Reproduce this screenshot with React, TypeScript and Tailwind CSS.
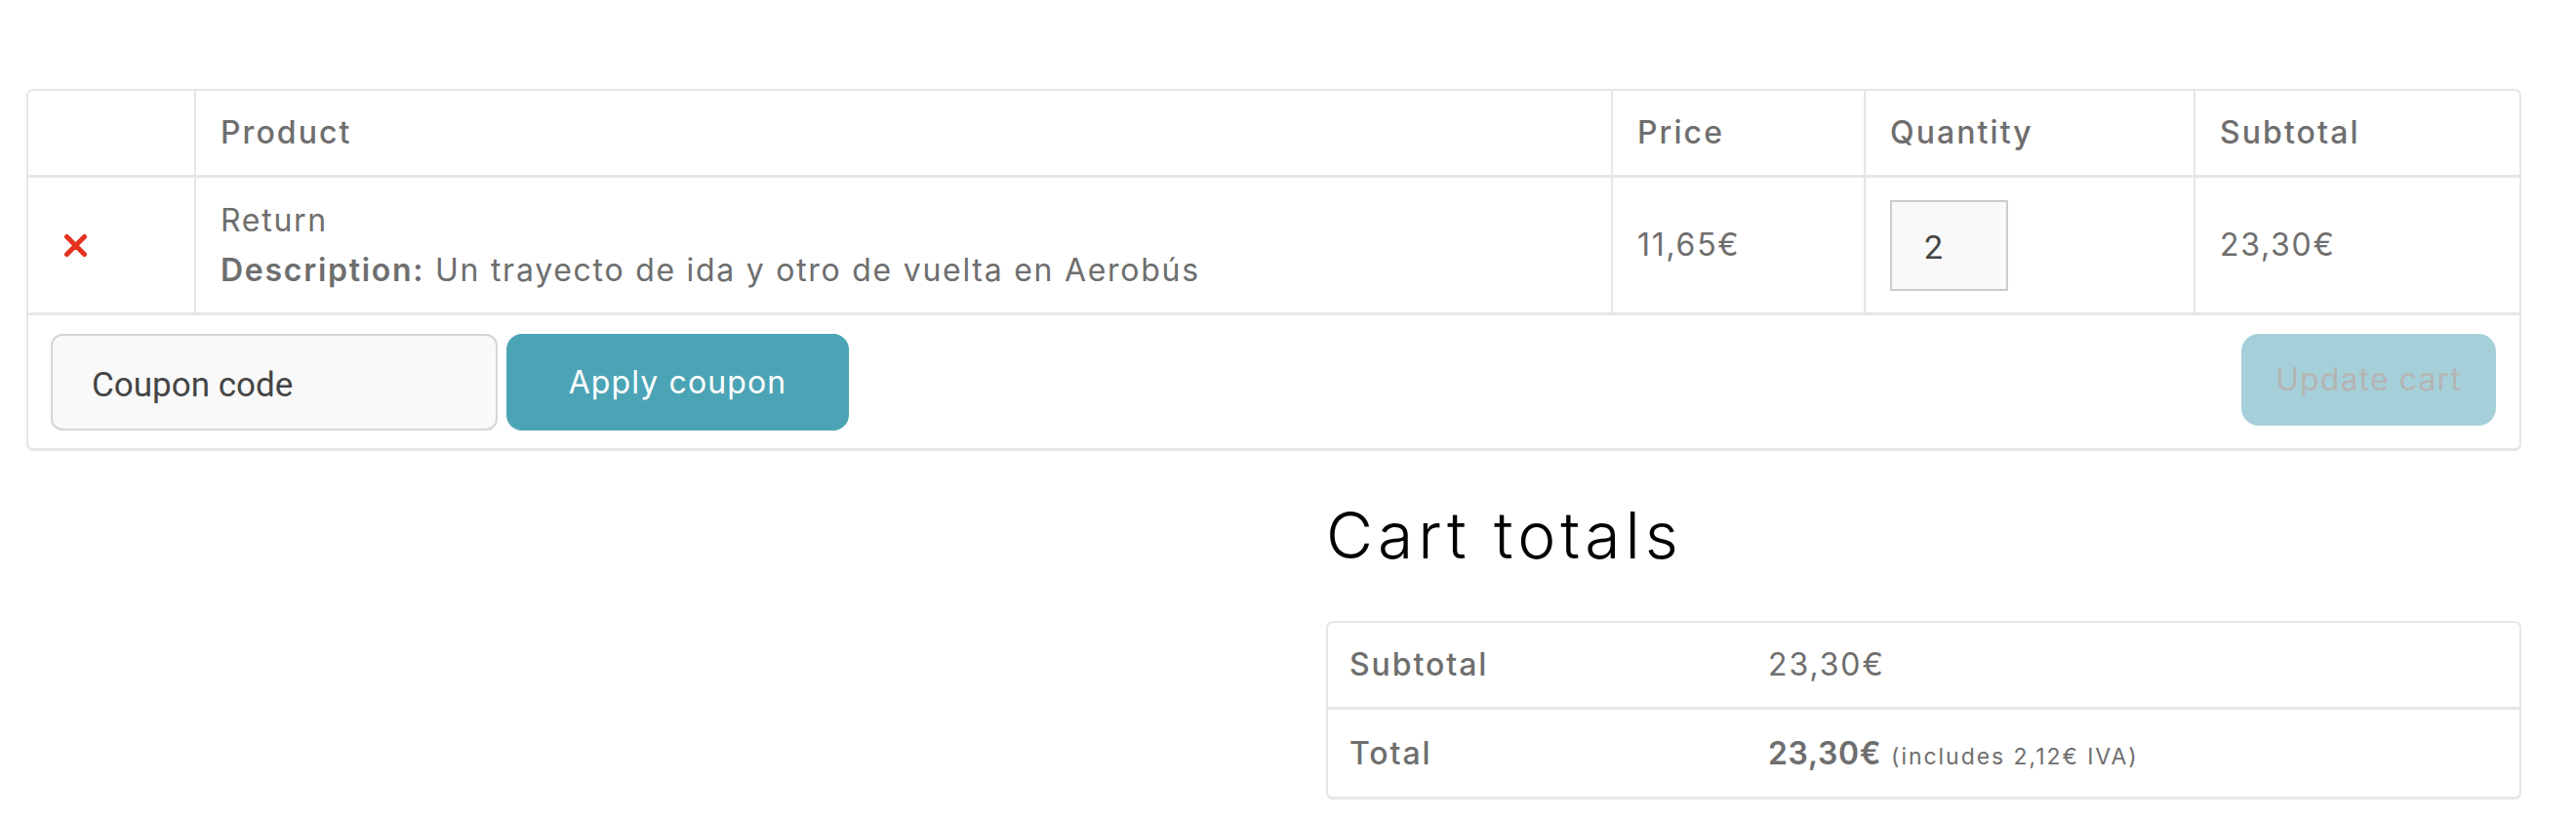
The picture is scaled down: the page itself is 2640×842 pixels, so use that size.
import React from "react";

const F = { fontFamily: "Inter, 'Open Sans', sans-serif" };

function XIcon() {
  return (
    <svg width="25" height="25" viewBox="0 0 25 25" className="block">
      <path d="M3.5 3.5 L21.5 21.5 M21.5 3.5 L3.5 21.5" stroke="#e5321f" strokeWidth="5" strokeLinecap="round" fill="none" />
    </svg>
  );
}

export default function App() {
  const cols = "grid grid-cols-[172px_1452px_259px_338px_1fr]";
  return (
    <div className="min-h-[842px] bg-white pt-[91px] pl-[27px] text-[#6e6e6e]" style={F}>
      <div className="w-[2557px]">
        {/* Cart table */}
        <div className="rounded-[7px] border-2 border-b-[3px] border-[#e6e6e6] overflow-hidden">
          <div className={`${cols} h-[89px] border-b-[3px] border-[#e6e6e6] text-[32px] font-medium tracking-[0.065em]`}>
            <div className="border-r-2 border-[#e6e6e6]" />
            <div className="border-r-2 border-[#e6e6e6] flex items-center px-[25px]">Product</div>
            <div className="border-r-2 border-[#e6e6e6] flex items-center px-[25px]">Price</div>
            <div className="border-r-2 border-[#e6e6e6] flex items-center px-[25px]">Quantity</div>
            <div className="flex items-center px-[25px]">Subtotal</div>
          </div>
          <div className={`${cols} h-[141px] border-b-[3px] border-[#e6e6e6] text-[32px] tracking-[0.054em]`}>
            <div className="border-r-2 border-[#e6e6e6] flex items-center pl-[36px]">
              <XIcon />
            </div>
            <div className="border-r-2 border-[#e6e6e6] flex flex-col justify-center px-[25px] leading-[51px]">
              <div>Return</div>
              <div>
                <span className="font-semibold">Description:</span> Un trayecto de ida y otro de vuelta en Aerobús
              </div>
            </div>
            <div className="border-r-2 border-[#e6e6e6] flex items-center px-[25px]">11,65€</div>
            <div className="border-r-2 border-[#e6e6e6] flex items-center px-[25px]">
              <div
                className="w-[121px] h-[93px] border-2 border-[#cccccc] bg-[#f9f9f9] flex items-center pl-[33px] pt-[4px] text-[34px] text-[#444]"
                style={{ fontFamily: "Roboto, 'Liberation Sans', sans-serif", letterSpacing: 0 }}
              >
                2
              </div>
            </div>
            <div className="flex items-center px-[25px]">23,30€</div>
          </div>
          <div className="flex items-start justify-between pt-[19px] pb-[18px] pl-[23px] pr-[24px]">
            <div className="flex gap-[9px]">
              <div
                className="w-[458px] h-[99px] rounded-[12px] border-2 border-[#d6d4d4] bg-[#f9f9f9] flex items-center pl-[40px] pt-[8px] text-[35px] text-[#454545]"
                style={{ fontFamily: "Roboto, 'Liberation Sans', sans-serif" }}
              >
                Coupon code
              </div>
              <div className="w-[351px] h-[99px] rounded-[16px] bg-[#4ba4b5] flex items-center justify-center text-[32px] text-white tracking-[0.035em]">
                Apply coupon
              </div>
            </div>
            <div className="w-[261px] h-[94px] rounded-[18px] bg-[#a6d0d9] flex items-center justify-center text-[32px] text-[#b4b4b4] tracking-[0.035em]">
              Update cart
            </div>
          </div>
        </div>

        {/* Cart totals */}
        <div className="flex justify-end">
          <div className="w-[1225px]">
            <h2 className="mt-[46px] mb-[48px] text-[66px] leading-[80px] font-light text-black tracking-[0.075em]">Cart totals</h2>
            <div className="rounded-[7px] border-2 border-b-[3px] border-[#e6e6e6] text-[32px] tracking-[0.06em]">
              <div className="grid grid-cols-[451px_1fr] h-[89px] border-b-[3px] border-[#e6e6e6] items-center">
                <div className="pl-[22px] font-medium">Subtotal</div>
                <div>23,30€</div>
              </div>
              <div className="grid grid-cols-[451px_1fr] h-[89px] items-center">
                <div className="pl-[22px] font-medium">Total</div>
                <div className="flex items-baseline">
                  <span className="font-semibold tracking-[0.02em]">23,30€</span>
                  <span className="ml-[10px] text-[23px] tracking-[0.085em]">(includes 2,12€ IVA)</span>
                </div>
              </div>
            </div>
          </div>
        </div>
      </div>
    </div>
  );
}
